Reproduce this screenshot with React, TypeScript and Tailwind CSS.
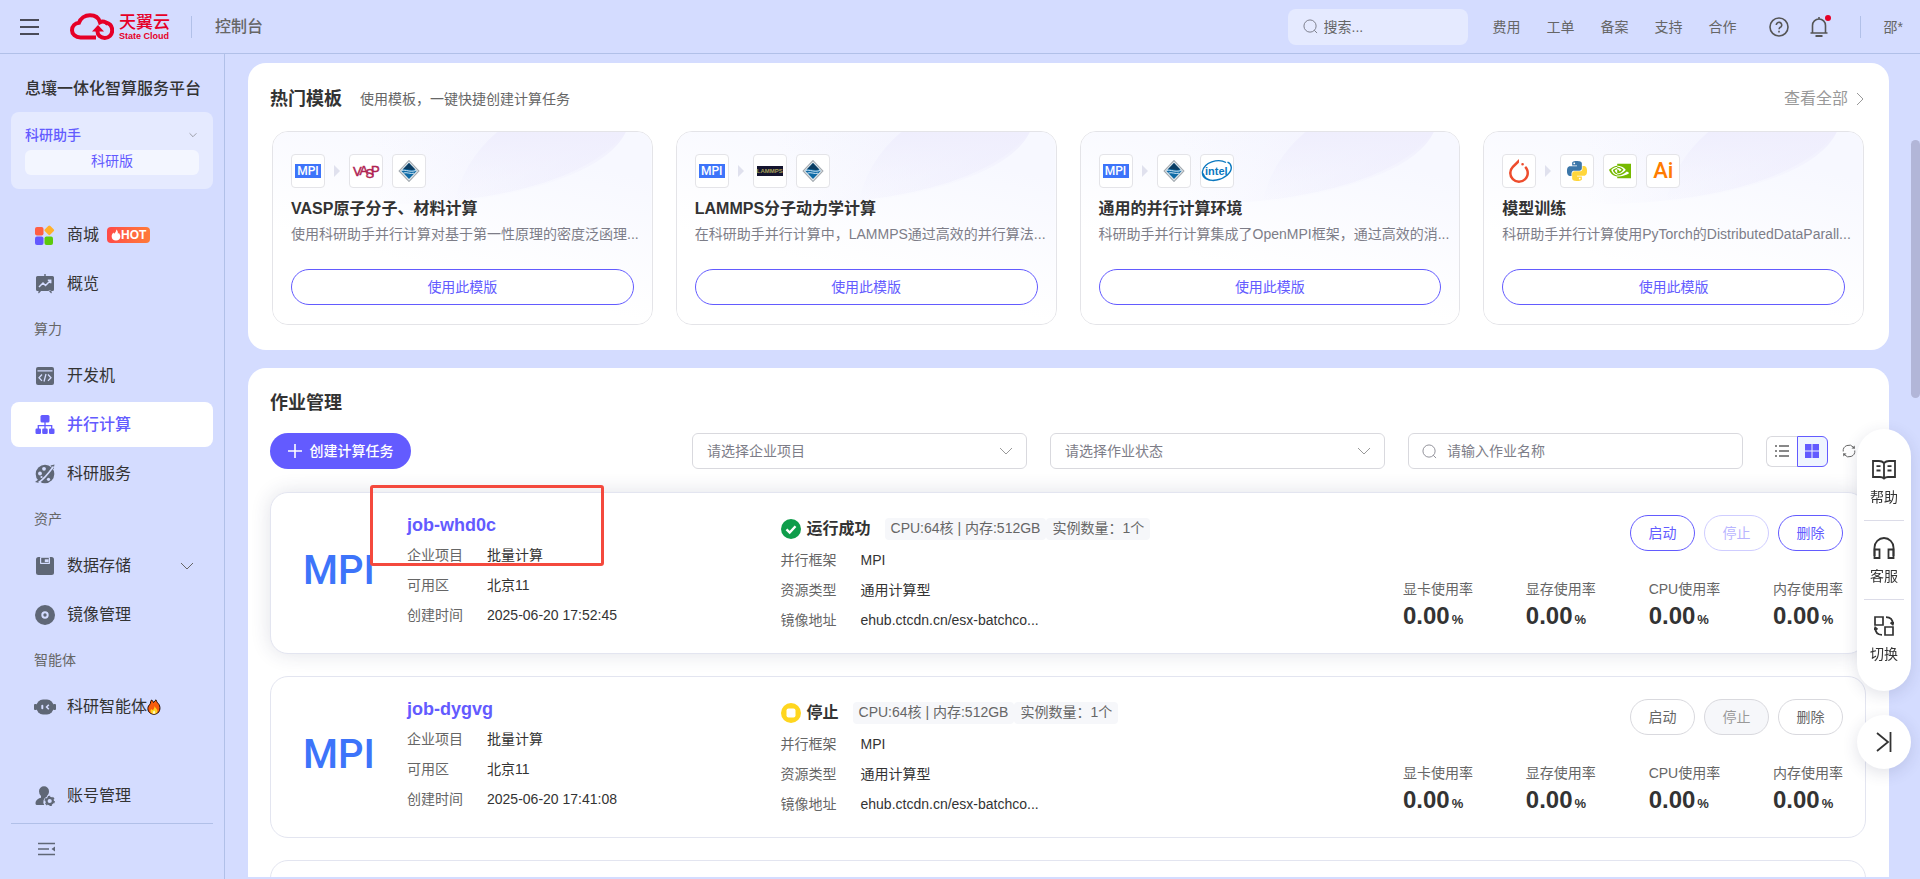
import { useState } from 'react';
import type { ReactNode } from 'react';
import clsx from 'clsx';
import { SiNvidia, SiPytorch } from 'react-icons/si';

type IconProps = { className?: string };

const Chevron = ({ className }: IconProps) => (
  <svg viewBox="0 0 14 8" fill="none" stroke="currentColor" strokeWidth="1" className={className} aria-hidden>
    <path d="M1 1l6 6 6-6" />
  </svg>
);

const SearchIcon = ({ className }: IconProps) => (
  <svg viewBox="0 0 16 16" fill="none" stroke="currentColor" className={className} aria-hidden>
    <circle cx="7.5" cy="7.5" r="6.5" />
    <path d="M12 12l3 3" />
  </svg>
);

function CloudLogo() {
  return (
    <svg viewBox="0 0 44 28" className="h-7 w-11" fill="none" aria-hidden>
      <path
        d="M26 24.500H10.500C5.500 24.500 2 21.200 2 17.200C2 13 5 10.200 9 9.700C10.500 5.300 14.800 2.200 20 2.200C25 2.200 28.800 5 30 9.200C32.500 7.800 36 8.800 38 11.300"
        stroke="#e60027"
        strokeWidth="4"
      />
      <path
        d="M36 9.600C40.500 10.600 42.200 14 42.200 17.400C42.200 21.800 38.800 25 34.800 25C30.500 25 27.500 22 27.500 18.500V16"
        stroke="#e60027"
        strokeWidth="4"
      />
      <path d="M22 18.500L28 12L34 18.500Z" fill="#e60027" />
    </svg>
  );
}

const Flame = ({ className }: IconProps) => (
  <svg viewBox="0 0 12 14" className={className} aria-hidden>
    <path
      fill="currentColor"
      d="M6.200.5C6.800 3 4.600 4.200 3.800 5.600C3.300 5.300 3.200 4.600 3.200 4C1.600 5.200.8 6.900.8 8.700C.8 11.600 3 13.600 6 13.600C9 13.600 11.200 11.600 11.200 8.700C11.200 6.800 10 5.400 9.400 4.200C9 5 8.700 5.400 8.200 5.600C8.500 3.600 7.900 1.600 6.200.5Z"
    />
  </svg>
);

const MallIcon = () => (
  <svg viewBox="0 0 20 20" className="size-5" aria-hidden>
    <rect x="0" y="2" width="8.500" height="8.500" rx="2" fill="#ff5f45" />
    <rect x="0" y="11.500" width="8.500" height="8.500" rx="2" fill="#6459ff" />
    <rect x="9.500" y="11.500" width="8.500" height="8.500" rx="2" fill="#5cc90c" />
    <rect x="10.500" y="1.500" width="7.600" height="7.600" rx="1.500" fill="#ffb12b" transform="rotate(45 14.300 5.300)" />
  </svg>
);

const BoardIcon = () => (
  <svg viewBox="0 0 20 20" className="size-5" aria-hidden>
    <path fill="currentColor" d="M9.300 0h1.400v2H9.300zM2.500 2h15A1.500 1.500 0 0119 3.500v12a1.500 1.500 0 01-1.500 1.500h-15A1.500 1.500 0 011 15.500v-12A1.500 1.500 0 012.500 2zM3 18l1.500-1.500h2L3.800 19.500zM17 18l-1.500-1.500h-2l2.700 3z" />
    <path d="M4 13l4-4 2.500 2.500L15.500 6.500M12.800 6.300h2.900v2.900" fill="none" stroke="#d4dcff" strokeWidth="1.500" />
  </svg>
);

const CodeIcon = () => (
  <svg viewBox="0 0 20 20" className="size-5" aria-hidden>
    <rect x="1" y="1" width="18" height="18" rx="2" fill="currentColor" />
    <path d="M2.500 4.800h15M7 8.500L4 11.700l3 3.200M13 8.500l3 3.200-3 3.200M11 8l-2 7.500" fill="none" stroke="#d4dcff" strokeWidth="1.300" />
  </svg>
);

const TreeIcon = () => (
  <svg viewBox="0 0 20 20" className="size-5" aria-hidden>
    <g fill="currentColor">
      <rect x="5.500" y="0" width="9" height="7.500" rx="1.500" />
      <rect x="0.500" y="13.500" width="5.500" height="5.500" rx="1.200" />
      <rect x="7.200" y="13.500" width="5.500" height="5.500" rx="1.200" />
      <rect x="14" y="13.500" width="5.500" height="5.500" rx="1.200" />
    </g>
    <path d="M10 7v7M3.300 14v-3.300h13.400V14" fill="none" stroke="currentColor" strokeWidth="1.300" />
  </svg>
);

const ScienceIcon = () => (
  <svg viewBox="0 0 20 20" className="size-5" aria-hidden>
    <circle cx="10" cy="10" r="9.300" fill="currentColor" />
    <path fill="currentColor" d="M0 18l4-3v4zM19.500 0.500l-4 1 3 4z" />
    <g fill="#d4dcff">
      <circle cx="9" cy="4.800" r="1.900" />
      <circle cx="5" cy="9.500" r="1.900" />
      <circle cx="6.500" cy="13" r="1.100" />
      <circle cx="13.500" cy="15.300" r="1.600" />
    </g>
    <path d="M3.500 18.500C8 16 13 10 18.500 2.500" fill="none" stroke="#d4dcff" strokeWidth="1.600" />
  </svg>
);

const DiskIcon = () => (
  <svg viewBox="0 0 20 20" className="size-5" aria-hidden>
    <rect x="1" y="1" width="18" height="18" rx="2.500" fill="currentColor" />
    <rect x="5" y="1" width="10" height="7" rx="0.800" fill="#d4dcff" />
    <rect x="6.200" y="1.800" width="7.600" height="5" fill="currentColor" />
    <rect x="9.800" y="3.300" width="3.800" height="2.800" fill="#d4dcff" />
  </svg>
);

const DiscIcon = () => (
  <svg viewBox="0 0 20 20" className="size-5" aria-hidden>
    <circle cx="10" cy="10" r="10" fill="currentColor" />
    <circle cx="10" cy="10" r="2.700" fill="none" stroke="#d4dcff" strokeWidth="2" />
  </svg>
);

const BotIcon = () => (
  <svg viewBox="0 0 22 20" className="-mx-px h-5 w-[22px]" aria-hidden>
    <rect x="2.500" y="2.500" width="17" height="15" rx="6.500" fill="currentColor" />
    <rect x="0" y="7" width="3" height="6" rx="1" fill="currentColor" />
    <rect x="19" y="7" width="3" height="6" rx="1" fill="currentColor" />
    <rect x="7.300" y="7.700" width="2" height="4.600" rx="1" fill="#d4dcff" />
    <path d="M14.800 7.800L12.600 10l2.200 2.200" fill="none" stroke="#d4dcff" strokeWidth="1.600" />
  </svg>
);

const AccountIcon = () => (
  <svg viewBox="0 0 20 20" className="size-5" aria-hidden>
    <path fill="currentColor" d="M9 .3a5 5 0 015 5c0 2-.8 3.600-2.100 4.700v.8a5.500 5.500 0 00-2.600 8.300H2a1.500 1.500 0 01-1.500-1.500c0-3.300 2.500-5 5.500-5.800V10A6.200 6.200 0 014 5.300a5 5 0 015-5z" />
    <circle cx="14.700" cy="15" r="3.200" fill="none" stroke="currentColor" strokeWidth="2.200" />
    <circle cx="14.700" cy="15" r="4.500" fill="none" stroke="currentColor" strokeWidth="1.400" strokeDasharray="2.350 2.350" />
  </svg>
);

type NavItem = {
  label: string;
  icon?: ReactNode;
  section?: boolean;
  active?: boolean;
  extra?: ReactNode;
};

const hotBadge = (
  <span className="ml-2 flex h-4 items-center rounded bg-linear-to-r from-[#ff4a48] to-[#ff7a38] pr-1 pl-1 text-xs font-bold text-white">
    <Flame className="h-3 w-2.5" />
    HOT
  </span>
);

const fireEmoji = (
  <svg viewBox="0 0 14 16" className="h-4 w-3.5" aria-hidden>
    <path
      d="M4.500 1C6 1.500 6 3 6.500 3.500C7.500 2.500 8 1.500 9 .8C9.500 3 11 4 12 5.500C14 9 13 15 7 15.300C1 15 0 10 1.500 7C2 6 3 5.500 3.300 4.500C3.500 3 3.800 2 4.500 1Z"
      fill="#f75c0c"
      stroke="#1d0d05"
      strokeWidth="1"
    />
    <path d="M7.500 7C8 9 10.500 10 10.500 12C10.500 14 9 15 7 15C5 15 3.500 14 3.500 12C3.500 11 4 10.500 4.500 10C5 10.800 5.500 11 6 11C6.800 10 7.500 9 7.500 7Z" fill="#ffd21f" />
    <path d="M7.200 11.500C8.500 12.500 8.800 14.800 7 14.800C5.200 14.800 5.500 12.800 7.200 11.500Z" fill="#fff8c8" />
  </svg>
);

const navItems: NavItem[] = [
  { label: '商城', icon: <MallIcon />, extra: hotBadge },
  { label: '概览', icon: <BoardIcon /> },
  { label: '算力', section: true },
  { label: '开发机', icon: <CodeIcon /> },
  { label: '并行计算', icon: <TreeIcon />, active: true },
  { label: '科研服务', icon: <ScienceIcon /> },
  { label: '资产', section: true },
  { label: '数据存储', icon: <DiskIcon />, extra: <Chevron className="mr-[19px] ml-auto h-2 w-3.5 text-[#666]" /> },
  { label: '镜像管理', icon: <DiscIcon /> },
  { label: '智能体', section: true },
  { label: '科研智能体', icon: <BotIcon />, extra: fireEmoji },
];

function NavLink({ item }: { item: NavItem }) {
  return (
    <a
      href="#"
      className={clsx(
        'flex h-[45px] items-center rounded-lg pl-6',
        item.active ? 'bg-white font-medium text-[#635bff]' : 'text-[#333]'
      )}>
      <span className={clsx('mr-3 shrink-0', !item.active && 'text-[#5f6776]')}>{item.icon}</span>
      {item.label}
      {item.extra}
    </a>
  );
}

function Header() {
  return (
    <header className="flex h-[54px] shrink-0 items-center border-b border-[#b1c0e8] pl-5 text-[#666]">
      <button type="button" aria-label="菜单" className="flex w-[19px] flex-col gap-[5px]">
        <span className="h-0.5 w-full bg-[#4a4b58]" />
        <span className="h-0.5 w-full bg-[#4a4b58]" />
        <span className="h-0.5 w-full bg-[#4a4b58]" />
      </button>
      <a href="#" className="ml-[31px] flex items-center gap-[5px] text-[#e60027]">
        <CloudLogo />
        <span className="flex flex-col pt-px">
          <span className="text-[17px] leading-[17px] font-medium">天翼云</span>
          <span className="text-[9px] leading-[10px] font-bold">State Cloud</span>
        </span>
      </a>
      <span className="ml-[21px] h-[22px] w-px bg-[#b1c0e8]" />
      <span className="ml-[23px] font-medium">控制台</span>

      <label className="ml-auto flex h-9 w-[180px] items-center gap-1.5 rounded-lg bg-[#e5eaff] pl-[15px] text-[#777a86]">
        <SearchIcon className="size-[15px] shrink-0" />
        <input
          aria-label="搜索"
          placeholder="搜索..."
          className="w-full bg-transparent text-sm outline-none placeholder:text-[#666]"
        />
      </label>
      <nav className="ml-[25px] flex gap-[26px] text-sm">
        <a href="#">费用</a>
        <a href="#">工单</a>
        <a href="#">备案</a>
        <a href="#">支持</a>
        <a href="#">合作</a>
      </nav>
      <button type="button" aria-label="帮助中心" className="ml-8">
        <svg viewBox="0 0 20 20" className="size-5" fill="none" stroke="#555" strokeWidth="1.600" aria-hidden>
          <circle cx="10" cy="10" r="9" />
          <path d="M7.300 8a2.700 2.700 0 115 1.400c-.8 1-2.200 1.300-2.200 2.900M10 13.800v1.700" />
        </svg>
      </button>
      <button type="button" aria-label="消息" className="relative ml-5">
        <svg viewBox="0 0 20 20" className="size-5" fill="none" stroke="#555" strokeWidth="1.600" aria-hidden>
          <path d="M10 0v2M1.500 16h17M3.500 16V8.500a6.500 6.500 0 0113 0V16" />
          <path d="M6.500 19h7" strokeWidth="2" />
        </svg>
        <span className="absolute -top-0.5 -right-0.5 size-1.5 rounded-full bg-[#e60027]" />
      </button>
      <span className="ml-[31px] h-[22px] w-px bg-[#b1c0e8]" />
      <span className="mr-[17px] ml-[23px] text-sm">邵*</span>
    </header>
  );
}

function Sidebar() {
  return (
    <aside className="flex w-[225px] shrink-0 flex-col border-r border-[#b1c0e8] pr-[11px] pl-[11px]">
      <h1 className="mt-[23px] pl-3.5 leading-6 font-medium text-[#333]">息壤一体化智算服务平台</h1>
      <div className="mt-[11px] h-[77px] rounded-lg bg-[#e5eaff] px-3.5 pt-3">
        <button type="button" className="flex w-full items-center justify-between text-sm leading-[22px] font-medium text-[#635bff]">
          科研助手
          <Chevron className="mr-0.5 h-1.5 w-2 text-[#666]" />
        </button>
        <div className="mt-1 h-[25px] rounded-md bg-[#f3f6ff] text-center text-sm leading-[23px] text-[#635bff]">科研版</div>
      </div>
      <nav className="mt-[23px] flex flex-col gap-1">
        {navItems.map(item =>
          item.section ? (
            <div key={item.label} className="h-[39px] pl-[23px] text-sm leading-[38px] text-[#666]">
              {item.label}
            </div>
          ) : (
            <NavLink key={item.label} item={item} />
          )
        )}
      </nav>
      <div className="mt-auto border-b border-[#b1c0e8] pb-[5px]">
        <NavLink item={{ label: '账号管理', icon: <AccountIcon /> }} />
      </div>
      <button type="button" aria-label="收起" className="mb-[23px] ml-[27px] pt-[18px] text-[#5f6776]">
        <svg viewBox="0 0 18 14" className="h-3.5 w-[18px]" fill="none" stroke="currentColor" strokeWidth="1.300" aria-hidden>
          <path d="M0 1.500h17M0 7h11M0 12.500h17" />
          <path d="M17 4.500v5L13.500 7z" fill="currentColor" stroke="none" />
        </svg>
      </button>
    </aside>
  );
}

const MpiTile = () => (
  <span className="flex h-3.5 w-[26px] items-center justify-center bg-[#3d74fa] font-['Roboto',sans-serif] text-xs leading-none font-medium text-white">
    MPI
  </span>
);

const VaspTile = () => (
  <svg viewBox="0 0 28 20" className="h-5 w-7" aria-hidden>
    <g fill="#b02352" stroke="#b02352" strokeWidth="0.500" fontFamily="Liberation Sans, sans-serif" fontSize="13">
      <text x="1" y="15">V</text>
      <text x="7.500" y="13.500">A</text>
      <text x="13.500" y="17">S</text>
      <text x="19" y="13.500">P</text>
    </g>
  </svg>
);

const LammpsTile = () => (
  <span className="flex h-2.5 w-[26px] items-center justify-center bg-[#14142e] text-[6px] leading-none font-bold text-[#a8a05a]">
    LAMMPS
  </span>
);

const DiamondTile = () => (
  <svg viewBox="0 0 20 20" className="size-[22px]" aria-hidden>
    <path d="M10 .5L19 10L10 19.500L1 10Z" fill="#e9edf0" stroke="#a4abb1" strokeWidth="1" />
    <path d="M10 2.800L17 10L10 17.200L3 10Z" fill="#0f6aa5" />
    <path d="M10 2.800L15.500 8.500C12 10.500 8 7.500 4.500 8.500Z" fill="#0b3d63" />
    <path d="M3.500 9.500C7 8.500 11 11.500 16.500 9.500M5 11.800C8 10.800 11.500 13 14.500 12" fill="none" stroke="#cfe6f5" strokeWidth="0.900" />
  </svg>
);

const IntelTile = () => (
  <svg viewBox="0 0 32 24" className="h-6 w-8" aria-hidden>
    <path
      d="M25 3.500C17 -1 3 3.500 1.500 12.500C.5 19.500 8 22.500 15.500 21C24 19.500 31 13.500 30.200 7.800C29.900 5.500 28.500 4 26.500 3.200M2.200 14.500C3.500 21.500 13 24 23 18.500"
      fill="none"
      stroke="#0b78bf"
      strokeWidth="1.400"
    />
    <text x="4" y="16" fill="#0b78bf" fontFamily="Liberation Sans, sans-serif" fontWeight="700" fontSize="11">
      intel
    </text>
  </svg>
);

const PythonTile = () => (
  <svg viewBox="0 0 24 24" className="size-5" aria-hidden>
    <path
      fill="#3c77a9"
      d="M14.250.180l.9.200.73.260.59.300.45.320.34.340.25.340.16.330.1.300.04.260.02.200-.01.130V8.500l-.05.630-.13.550-.21.460-.26.380-.3.310-.33.250-.35.190-.35.140-.33.100-.3.070-.26.040-.21.020H8.770l-.69.050-.59.140-.5.220-.41.270-.33.320-.27.350-.2.360-.15.370-.1.350-.07.320-.04.270-.02.210v3.060H3.170l-.21-.03-.28-.07-.32-.12-.35-.18-.36-.26-.36-.36-.35-.46-.32-.59-.28-.73-.21-.88-.14-1.050-.05-1.230.06-1.220.16-1.040.24-.87.320-.71.360-.57.400-.44.420-.33.420-.24.400-.16.360-.1.320-.05.240-.01h.16l.06.010h8.160v-.83H6.180l-.01-2.750-.02-.37.050-.34.110-.31.170-.28.250-.26.310-.23.380-.2.440-.18.510-.15.580-.12.640-.1.710-.06.770-.04.840-.02 1.270.050zm-6.300 1.980l-.23.330-.08.410.08.410.23.340.33.220.41.090.41-.09.330-.22.230-.34.080-.41-.08-.41-.23-.33-.33-.22-.41-.09-.41.090z"
    />
    <path
      fill="#ffd63b"
      d="M21.040 6.110l.28.060.32.120.35.180.36.270.36.350.35.470.32.590.28.730.21.880.14 1.040.05 1.230-.06 1.230-.16 1.040-.24.860-.32.710-.36.570-.4.450-.42.330-.42.240-.4.160-.36.090-.32.050-.24.020-.16-.01h-8.220v.82h5.840l.01 2.760.02.360-.05.340-.11.310-.17.290-.25.250-.31.240-.38.200-.44.170-.51.150-.58.130-.64.090-.71.070-.77.040-.84.010-1.270-.04-1.070-.14-.9-.2-.73-.25-.59-.3-.45-.33-.34-.34-.25-.34-.16-.33-.1-.3-.04-.25-.02-.2.010-.13v-5.340l.05-.64.130-.54.210-.46.260-.38.300-.32.330-.24.350-.2.350-.14.330-.1.300-.06.260-.04.210-.02.130-.01h5.840l.69-.05.590-.14.500-.21.410-.28.330-.32.270-.35.200-.36.150-.36.100-.35.070-.32.040-.28.020-.21V6.070h2.090l.14.010zm-6.470 14.250l-.23.330-.08.410.08.410.23.330.33.230.41.080.41-.08.330-.23.230-.33.080-.41-.08-.41-.23-.33-.33-.23-.41-.08-.41.080z"
    />
  </svg>
);

const AiTile = () => (
  <span className="font-['Roboto',sans-serif] text-[22px] leading-none font-medium text-[#ff7c00]">Ai</span>
);

const templates = [
  {
    title: 'VASP原子分子、材料计算',
    desc: '使用科研助手并行计算对基于第一性原理的密度泛函理...',
    tiles: [<MpiTile />, <VaspTile />, <DiamondTile />],
  },
  {
    title: 'LAMMPS分子动力学计算',
    desc: '在科研助手并行计算中，LAMMPS通过高效的并行算法...',
    tiles: [<MpiTile />, <LammpsTile />, <DiamondTile />],
  },
  {
    title: '通用的并行计算环境',
    desc: '科研助手并行计算集成了OpenMPI框架，通过高效的消...',
    tiles: [<MpiTile />, <DiamondTile />, <IntelTile />],
  },
  {
    title: '模型训练',
    desc: '科研助手并行计算使用PyTorch的DistributedDataParall...',
    tiles: [
      <SiPytorch className="size-6 text-[#ee4c2c]" />,
      <PythonTile />,
      <SiNvidia className="size-[22px] text-[#76b900]" />,
      <AiTile />,
    ],
  },
];

function CardGlow() {
  return (
    <svg viewBox="0 0 380 193" preserveAspectRatio="none" className="absolute inset-0 size-full" aria-hidden>
      <defs>
        <linearGradient id="glow-base" x1="0" y1="1" x2="0.500" y2="0">
          <stop offset="0.400" stopColor="#ffffff" />
          <stop offset="1" stopColor="#f7f8ff" />
        </linearGradient>
        <linearGradient id="glow-arc" x1="0" y1="0" x2="1" y2="0">
          <stop offset="0.450" stopColor="#f3f3fe" stopOpacity="0" />
          <stop offset="1" stopColor="#efeefd" />
        </linearGradient>
        <linearGradient id="glow-inner" x1="0" y1="0" x2="0" y2="1">
          <stop offset="0" stopColor="#efeefd" />
          <stop offset="1" stopColor="#f3f3fe" stopOpacity="0" />
        </linearGradient>
      </defs>
      <rect width="380" height="193" fill="url(#glow-base)" />
      <ellipse cx="124" cy="-24" rx="236" ry="96" fill="url(#glow-arc)" />
      <path d="M225 0Q190 30 182 72Q330 50 354 0Z" fill="url(#glow-inner)" />
    </svg>
  );
}

function TemplateCard({ title, desc, tiles }: (typeof templates)[number]) {
  return (
    <article className="relative overflow-hidden rounded-2xl border border-[#e4e4e8] px-[18px] pt-[22px] pb-[19px]">
      <CardGlow />
      <div className="relative">
        <div className="flex items-center gap-[9px]">
          {tiles.map((tile, i) => (
            <div key={i} className="flex items-center gap-[9px]">
              <span className="flex size-[34px] items-center justify-center rounded border border-[#e4e4e8] bg-white">{tile}</span>
              {i === 0 && (
                <svg viewBox="0 0 6 12" className="h-3 w-1.5" aria-hidden>
                  <path d="M0 0l6 6-6 6z" fill="#e0e1ee" />
                </svg>
              )}
            </div>
          ))}
        </div>
        <h3 className="mt-[9px] leading-6 font-bold text-[#333]">{title}</h3>
        <p className="mt-0.5 text-sm leading-[22px] whitespace-nowrap text-[#7d7d88]">{desc}</p>
        <button type="button" className="mt-6 h-9 w-full rounded-full border border-[#635bff] bg-white text-sm text-[#635bff]">
          使用此模版
        </button>
      </div>
    </article>
  );
}

function HotTemplates() {
  return (
    <section className="rounded-[18px] bg-white px-[22px] pt-5 pb-[25px]">
      <div className="flex h-8 items-center pr-[3px]">
        <h2 className="text-lg font-bold text-[#333]">热门模板</h2>
        <span className="ml-[18px] text-sm text-[#666]">使用模板，一键快捷创建计算任务</span>
        <a href="#" className="ml-auto flex items-center gap-2 text-[#999]">
          查看全部
          <svg viewBox="0 0 8 14" className="h-3.5 w-2" fill="none" stroke="currentColor" aria-hidden>
            <path d="M1 1l6 6-6 6" />
          </svg>
        </a>
      </div>
      <div className="mt-4 grid grid-cols-4 gap-[23px] pr-[3px] pl-0.5">
        {templates.map(t => (
          <TemplateCard key={t.title} {...t} />
        ))}
      </div>
    </section>
  );
}

function FilterSelect({ label }: { label: string }) {
  return (
    <div className="relative w-[335px]">
      <select
        aria-label={label}
        defaultValue=""
        className="h-9 w-full appearance-none rounded-md border border-[#d9d9de] bg-white pl-3.5 text-sm text-[#7d7d88] outline-none">
        <option value="">{label}</option>
      </select>
      <Chevron className="pointer-events-none absolute top-3.5 right-3.5 h-2 w-3.5 text-[#999]" />
    </div>
  );
}

function Toolbar() {
  const [view, setView] = useState<'list' | 'grid'>('grid');
  return (
    <div className="mt-4 flex items-center pr-2.5">
      <button type="button" className="flex h-9 w-[141px] items-center justify-center gap-2 rounded-full bg-[#635bff] text-sm font-medium text-white">
        <svg viewBox="0 0 14 14" className="size-3.5" stroke="currentColor" strokeWidth="1.600" aria-hidden>
          <path d="M7 0v14M0 7h14" />
        </svg>
        创建计算任务
      </button>
      <div className="ml-auto flex items-center gap-[23px]">
        <FilterSelect label="请选择企业项目" />
        <FilterSelect label="请选择作业状态" />
        <label className="flex h-9 w-[335px] items-center gap-2.5 rounded-md border border-[#d9d9de] bg-white pl-[13px] text-[#8c8c94]">
          <SearchIcon className="size-[15px] shrink-0" />
          <input
            aria-label="作业名称"
            placeholder="请输入作业名称"
            className="w-full bg-transparent text-sm outline-none placeholder:text-[#7d7d88]"
          />
        </label>
        <div className="flex h-[31px] w-[62px]">
          <button
            type="button"
            aria-label="列表视图"
            onClick={() => setView('list')}
            className={clsx(
              'flex flex-1 items-center justify-center rounded-l-md border',
              view === 'list' ? 'border-[#635bff] bg-[#f0f5ff] text-[#635bff]' : 'border-r-0 border-[#d9d9de] text-[#888]'
            )}>
            <svg viewBox="0 0 14 14" className="size-3.5" stroke="currentColor" strokeWidth="2" aria-hidden>
              <path d="M0 2h2M4 2h10M0 7h2M4 7h10M0 12h2M4 12h10" />
            </svg>
          </button>
          <button
            type="button"
            aria-label="卡片视图"
            onClick={() => setView('grid')}
            className={clsx(
              'flex flex-1 items-center justify-center rounded-r-md border',
              view === 'grid' ? 'border-[#635bff] bg-[#eff5ff] text-[#635bff]' : 'border-l-0 border-[#d9d9de] text-[#888]'
            )}>
            <svg viewBox="0 0 14 14" className="size-3.5" fill="currentColor" aria-hidden>
              <path d="M0 0h6.500v6.500H0zM7.500 0H14v6.500H7.500zM0 7.500h6.500V14H0zM7.500 7.500H14V14H7.500z" />
            </svg>
          </button>
        </div>
      </div>
      <button type="button" aria-label="刷新" className="ml-3.5 text-[#666]">
        <svg viewBox="0 0 14 14" className="size-3.5" fill="none" stroke="currentColor" aria-hidden>
          <path d="M1.200 7.500A5.800 5.800 0 0111.500 3.300M12.800 6.500A5.800 5.800 0 012.500 10.700" />
          <path d="M9.500 4.500L13 4.800L12.600 1.500zM4.500 9.500L1 9.200L1.400 12.500z" fill="currentColor" stroke="none" />
        </svg>
      </button>
    </div>
  );
}

type Job = {
  name: string;
  time: string;
  status: 'success' | 'stopped';
  highlighted?: boolean;
};

const jobs: Job[] = [
  { name: 'job-whd0c', time: '2025-06-20 17:52:45', status: 'success', highlighted: true },
  { name: 'job-dygvg', time: '2025-06-20 17:41:08', status: 'stopped' },
];

const usages = ['显卡使用率', '显存使用率', 'CPU使用率', '内存使用率'];

function Fields({ rows }: { rows: [string, string][] }) {
  return (
    <dl className="text-sm leading-[30px]">
      {rows.map(([label, value]) => (
        <div key={label} className="flex">
          <dt className="w-20 text-[#666]">{label}</dt>
          <dd className="text-[#333]">{value}</dd>
        </div>
      ))}
    </dl>
  );
}

function StatusIcon({ status }: { status: Job['status'] }) {
  return status === 'success' ? (
    <svg viewBox="0 0 20 20" className="size-5" aria-hidden>
      <circle cx="10" cy="10" r="10" fill="#0f9d4b" />
      <path d="M5.500 10.300l3.200 3.200 5.800-6.200" fill="none" stroke="#fff" strokeWidth="2.400" />
    </svg>
  ) : (
    <svg viewBox="0 0 20 20" className="size-5" aria-hidden>
      <circle cx="10" cy="10" r="10" fill="#ffd61f" />
      <rect x="5.500" y="5.500" width="9" height="9" rx="2" fill="#fff" />
    </svg>
  );
}

function JobCard({ name, time, status, highlighted }: Job) {
  const pill = 'h-9 w-[65px] rounded-full border text-sm';
  return (
    <article
      className={clsx(
        'relative grid h-[162px] shrink-0 grid-cols-[136px_3fr_5fr_440px] rounded-[18px] border border-[#e3e5f0] bg-white pr-[22px]',
        highlighted && 'shadow-[0_0_20px_rgba(40,50,90,0.14)]'
      )}>
      <div className="flex items-center justify-center pb-1 font-['Roboto',sans-serif] text-[40px] font-medium text-[#3d74fa]">MPI</div>
      <div className="pt-5">
        <h3 className="mb-[3px] text-lg leading-6 font-bold text-[#635bff]">
          <a href="#">{name}</a>
        </h3>
        <Fields
          rows={[
            ['企业项目', '批量计算'],
            ['可用区', '北京11'],
            ['创建时间', time],
          ]}
        />
      </div>
      <div className="pt-6">
        <div className="mb-1 flex h-6 items-center">
          <StatusIcon status={status} />
          <span className="ml-1.5 font-bold text-[#333]">{status === 'success' ? '运行成功' : '停止'}</span>
          <span className="ml-3.5 h-[22px] rounded-sm bg-[#f6f7fa] px-1.5 text-sm leading-5 text-[#666]">CPU:64核 | 内存:512GB</span>
          <span className="h-[22px] rounded-sm bg-[#f6f7fa] px-1.5 text-sm leading-5 text-[#666]">实例数量：1个</span>
        </div>
        <Fields
          rows={[
            ['并行框架', 'MPI'],
            ['资源类型', '通用计算型'],
            ['镜像地址', 'ehub.ctcdn.cn/esx-batchco...'],
          ]}
        />
      </div>
      <div className="pt-[22px]">
        <div className="flex justify-end gap-[9px]">
          {highlighted ? (
            <>
              <button type="button" className={clsx(pill, 'border-[#635bff] text-[#635bff]')}>启动</button>
              <button type="button" disabled className={clsx(pill, 'border-[#cfcdff] text-[#b9b5ff]')}>停止</button>
              <button type="button" className={clsx(pill, 'border-[#635bff] text-[#635bff]')}>删除</button>
            </>
          ) : (
            <>
              <button type="button" className={clsx(pill, 'border-[#d9d9de] text-[#666]')}>启动</button>
              <button type="button" disabled className={clsx(pill, 'border-[#d9d9de] bg-[#f6f7fa] text-[#999]')}>停止</button>
              <button type="button" className={clsx(pill, 'border-[#d9d9de] text-[#666]')}>删除</button>
            </>
          )}
        </div>
        <div className="mt-7 flex justify-between">
          {usages.map(label => (
            <div key={label}>
              <div className="text-sm leading-5 text-[#666]">{label}</div>
              <div className="mt-[3px] text-2xl leading-7 font-bold text-[#333]">
                0.00<span className="ml-0.5 text-[13px]">%</span>
              </div>
            </div>
          ))}
        </div>
      </div>
      {highlighted && <div className="pointer-events-none absolute -top-2 left-[99px] h-[81px] w-[234px] rounded-[3px] border-3 border-[#f4493d]" />}
    </article>
  );
}

function JobManagement() {
  return (
    <section className="flex min-h-0 flex-1 flex-col overflow-hidden rounded-t-[18px] bg-white pt-[21px] pr-[23px] pl-[22px]">
      <h2 className="text-lg leading-7 font-bold text-[#333]">作业管理</h2>
      <Toolbar />
      <div className="mt-[23px] flex flex-col gap-[22px]">
        {jobs.map(job => (
          <JobCard key={job.name} {...job} />
        ))}
        <div className="h-[162px] shrink-0 rounded-[18px] border border-[#e3e5f0]" />
      </div>
    </section>
  );
}

function FloatingTools() {
  const tool = 'flex w-10 flex-col items-center pt-4 pb-[13px] text-sm leading-5 text-[#333]';
  return (
    <div className="fixed top-[429px] right-[9px] w-[54px]">
      <div className="flex flex-col items-center rounded-full bg-white pt-[15px] pb-3.5 shadow-[0_4px_16px_rgba(40,50,90,0.14)]">
        <button type="button" className={tool}>
          <svg viewBox="0 0 24 20" className="mb-[7px] h-5 w-6" fill="none" stroke="currentColor" strokeWidth="1.800" aria-hidden>
            <path d="M12 3C10.500 1.500 9 1 7 1H1v16h7c1.500 0 3 .5 4 1.500C13 17.500 14.500 17 16 17h7V1h-6c-2 0-3.500.5-5 2zM12 3v15M4.500 6.200h4M4.500 10.500h4M15.500 6.200h4M15.500 10.500h4" />
          </svg>
          帮助
        </button>
        <span className="h-px w-10 bg-[#dcdce8]" />
        <button type="button" className={tool}>
          <svg viewBox="0 0 22 22" className="mb-[7px] size-[22px]" fill="none" stroke="currentColor" strokeWidth="1.800" aria-hidden>
            <path d="M1.500 19V10.500a9.500 9.500 0 0119 0V19" />
            <path d="M1.500 12.500h5V21h-5zM15.500 12.500h5V21h-5z" />
          </svg>
          客服
        </button>
        <span className="h-px w-10 bg-[#dcdce8]" />
        <button type="button" className={tool}>
          <svg viewBox="0 0 20 20" className="mb-2 size-5" fill="none" stroke="currentColor" strokeWidth="1.700" aria-hidden>
            <path d="M1 1h8v8H1zM11 11h8v8h-8zM12 1.200c4 0 6.800 2.500 6.800 7M8 18.800c-4 0-6.800-2.500-6.800-7M16.500 6.500l2.300 2 1-2.500M3.500 13.500l-2.300-2-1 2.500" />
          </svg>
          切换
        </button>
      </div>
      <button
        type="button"
        aria-label="收起工具栏"
        className="mt-6 flex size-[54px] items-center justify-center rounded-full bg-white shadow-[0_4px_16px_rgba(40,50,90,0.14)]">
        <svg viewBox="0 0 16 20" className="h-5 w-4" fill="none" stroke="#333" strokeWidth="1.800" aria-hidden>
          <path d="M1 1l11 9-11 9M14.500 0v20" />
        </svg>
      </button>
    </div>
  );
}

export default function App() {
  return (
    <div className="flex h-screen flex-col overflow-hidden bg-[#d4dcff] font-['Liberation_Sans','Noto_Sans_CJK_SC',sans-serif] text-base">
      <Header />
      <div className="flex min-h-0 flex-1">
        <Sidebar />
        <main className="relative flex min-w-0 flex-1 flex-col gap-[18px] pt-[9px] pr-[31px] pb-0.5 pl-[23px]">
          <HotTemplates />
          <JobManagement />
          <div className="absolute top-[86px] right-0 h-[258px] w-[9px] rounded-full bg-[#b2b6d8]" />
        </main>
      </div>
      <FloatingTools />
    </div>
  );
}
